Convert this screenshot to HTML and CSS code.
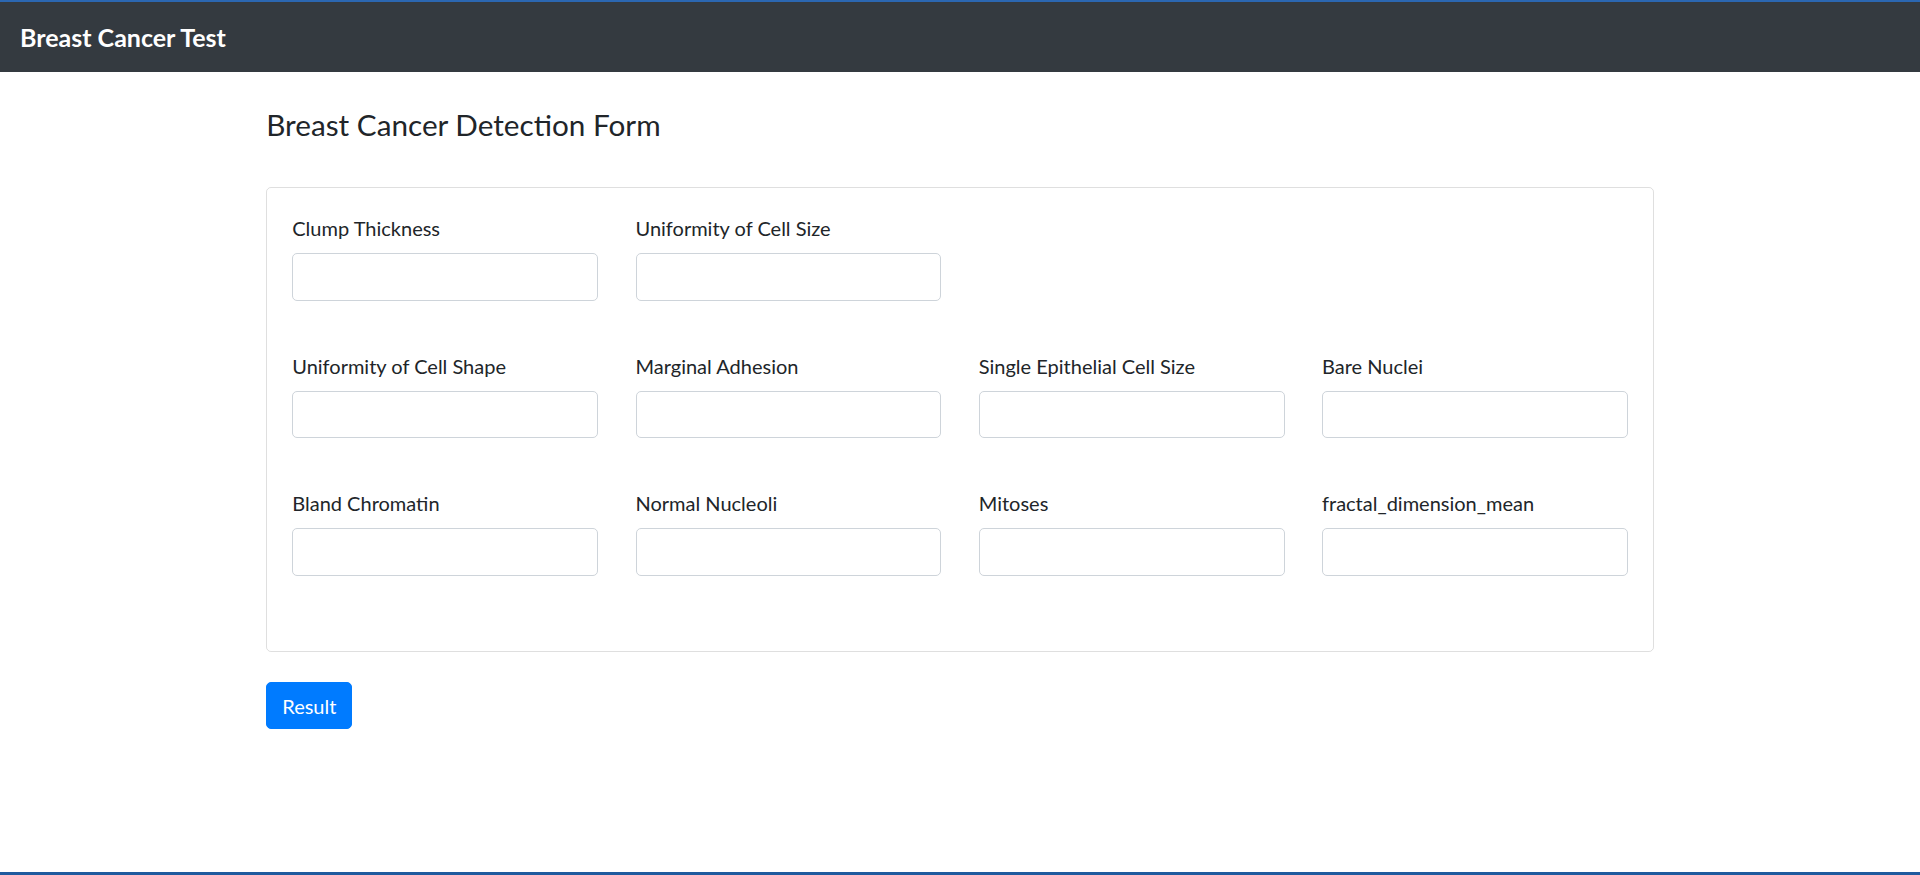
FILE: index.html
```html
<!DOCTYPE html>
<html lang="en">
<head>
<meta charset="utf-8">
<title>Breast Cancer Test</title>
<link rel="stylesheet" href="styles.css">
</head>
<body>
  <div class="topline"></div>
  <nav class="navbar">
    <a class="brand" href="#">Breast Cancer Test</a>
  </nav>
  <main class="container">
    <h4 class="title">Breast Cancer Detection Form</h4>
    <form class="card">
      <div class="form-row">
        <div class="form-group"><label>Clump Thickness</label><input class="form-control" type="text"></div>
        <div class="form-group"><label>Uniformity of Cell Size</label><input class="form-control" type="text"></div>
      </div>
      <div class="form-row">
        <div class="form-group"><label>Uniformity of Cell Shape</label><input class="form-control" type="text"></div>
        <div class="form-group"><label>Marginal Adhesion</label><input class="form-control" type="text"></div>
        <div class="form-group"><label>Single Epithelial Cell Size</label><input class="form-control" type="text"></div>
        <div class="form-group"><label>Bare Nuclei</label><input class="form-control" type="text"></div>
      </div>
      <div class="form-row">
        <div class="form-group"><label>Bland Chromatin</label><input class="form-control" type="text"></div>
        <div class="form-group"><label>Normal Nucleoli</label><input class="form-control" type="text"></div>
        <div class="form-group"><label>Mitoses</label><input class="form-control" type="text"></div>
        <div class="form-group"><label>fractal_dimension_mean</label><input class="form-control" type="text"></div>
      </div>
    </form>
    <button class="btn-primary" type="button">Result</button>
  </main>
  <div class="bottomline"></div>
</body>
</html>
```

FILE: styles.css
```css
* { box-sizing: border-box; }

html, body {
  margin: 0;
  padding: 0;
}

body {
  min-height: 100vh;
  display: flex;
  flex-direction: column;
  font-family: Lato, "Noto Sans", sans-serif;
  font-size: 20px;
  line-height: 30px;
  color: #212529;
  background: #fff;
}

.topline {
  height: 2px;
  background: #2b67b2;
}

.bottomline {
  margin-top: auto;
  height: 3px;
  background: #1f5a9e;
}

.navbar {
  height: 70px;
  background: #343a40;
  display: flex;
  align-items: center;
  padding: 2px 20px 0;
}

.brand {
  color: #fff;
  text-decoration: none;
  font-weight: 700;
  font-size: 25px;
  line-height: 37.5px;
}

.container {
  width: 1387.5px;
  margin: 0 auto;
  padding-top: 35px;
}

.title {
  margin: 0;
  font-size: 29.7px;
  line-height: 36px;
  font-weight: 400;
}

.card {
  margin-top: 44px;
  border: 1px solid rgba(0, 0, 0, 0.125);
  border-radius: 5px;
  padding: 25px;
}

.form-row {
  display: grid;
  grid-template-columns: repeat(4, 1fr);
  column-gap: 37.5px;
  margin-bottom: 50px;
}

.form-group label {
  display: block;
  margin-bottom: 10px;
  white-space: nowrap;
}

.form-control {
  display: block;
  width: 100%;
  height: 47.5px;
  border: 1px solid #ced4da;
  border-radius: 5px;
  background: #fff;
  padding: 7.5px 15px;
  font: inherit;
}

.btn-primary {
  margin-top: 30.5px;
  background: #007bff;
  border: 1px solid #007bff;
  color: #fff;
  border-radius: 5px;
  padding: 7.5px 15px;
  font: inherit;
  line-height: 30px;
  cursor: pointer;
}
```
